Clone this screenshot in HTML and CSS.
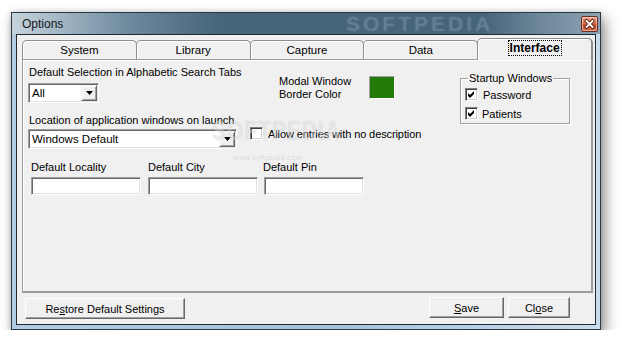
FILE: index.html
```html
<!DOCTYPE html>
<html>
<head>
  <title>Options</title>
  <meta name="viewport" content="width=device-width, initial-scale=1">
  <link rel="stylesheet" href="styles.css">
</head>
<body>
  <div class="window">
    <div class="titlebar">
      <span class="title">Options</span>
      <span class="wm-title">SOFTPEDIA</span>
      <span class="close-btn">
        <svg width="15" height="14" viewBox="0 0 15 14"><path d="M4.5 4L10.5 10M10.5 4L4.5 10" stroke="#5a1a0c" stroke-width="3.4" stroke-linecap="square"/><path d="M4.5 4L10.5 10M10.5 4L4.5 10" stroke="#fff" stroke-width="1.8" stroke-linecap="square"/></svg>
      </span>
    </div>
    <div class="client">
      <div class="tabs">
        <div class="tab">System</div>
        <div class="tab">Library</div>
        <div class="tab">Capture</div>
        <div class="tab">Data</div>
        <div class="tab active"><span class="focus">Interface</span></div>
      </div>
      <div class="panel">
        <div class="wm-body">SOFTPEDIA</div>
        <div class="wm-url">www.softpedia.com</div>
        <div class="top">
          <div class="left-col">
            <div class="lbl">Default Selection in Alphabetic Search Tabs</div>
            <div class="combo combo-all">
              <span class="combo-text">All</span>
              <span class="drop"><svg width="7" height="4" viewBox="0 0 7 4"><path d="M0 0H7L3.5 4Z" fill="#000"/></svg></span>
            </div>
            <div class="lbl lbl-loc">Location of application windows on launch</div>
            <div class="combo combo-loc">
              <span class="combo-text">Windows Default</span>
              <span class="drop"><svg width="7" height="4" viewBox="0 0 7 4"><path d="M0 0H7L3.5 4Z" fill="#000"/></svg></span>
            </div>
          </div>
          <div class="right-col">
            <div class="right-top">
              <div class="modal-lbl">Modal Window<br>Border Color</div>
              <div class="swatch"></div>
              <fieldset class="group">
                <legend>Startup Windows</legend>
                <label class="check"><span class="box"><svg width="7" height="7" viewBox="0 0 7 7"><path d="M0 2L2 4L6 0V3L2 7L0 5Z" fill="#000"/></svg></span>Password</label>
                <label class="check"><span class="box"><svg width="7" height="7" viewBox="0 0 7 7"><path d="M0 2L2 4L6 0V3L2 7L0 5Z" fill="#000"/></svg></span>Patients</label>
              </fieldset>
            </div>
            <label class="check allow"><span class="box"></span>Allow entries with no description</label>
          </div>
        </div>
        <div class="fields">
          <div class="field f-loc">
            <div class="lbl">Default Locality</div>
            <div class="edit"></div>
          </div>
          <div class="field f-city">
            <div class="lbl">Default City</div>
            <div class="edit"></div>
          </div>
          <div class="field f-pin">
            <div class="lbl pin-lbl">Default Pin</div>
            <div class="edit"></div>
          </div>
        </div>
      </div>
      <div class="actions">
        <button class="btn btn-restore">Re<u>s</u>tore Default Settings</button>
        <button class="btn btn-save"><u>S</u>ave</button>
        <button class="btn btn-close">Cl<u>o</u>se</button>
      </div>
    </div>
  </div>
</body>
</html>
```

FILE: styles.css
```css
body { margin:0; background:#fff; font-family:"Liberation Sans", Arial, sans-serif; font-size:11px; color:#000; }

.window { box-sizing:border-box; width:590px; height:318px; margin:12px 0 0 11px;
          border:1px solid #2b3944; padding:0 4px 4px;
          background:linear-gradient(to right, #b2cbe0, #a6c3dc 55%, #c9dcec);
          box-shadow:4px 6px 13px rgba(0,0,0,0.45), -1px 0 5px rgba(0,0,0,0.15);
          display:flex; flex-direction:column; }

.titlebar { height:21px; margin:0 -4px; padding:0 2px 0 10px; position:relative;
            display:flex; align-items:center; justify-content:space-between;
            background:linear-gradient(to right, #c6d3dc 0%, #a4b7c5 8%, #6c899d 20%, #47657b 35%, #46647a 80%, #6e889a 90%, #8ca2b2 100%); }
.title { font-size:12px; color:#101820; padding-top:1px; }
.wm-title { position:absolute; left:334px; top:0; font-size:21px; line-height:21px; font-weight:bold; letter-spacing:3px;
            color:rgba(200,218,230,0.1); text-shadow:0 0 2px rgba(200,218,230,0.18); }
.close-btn { width:17px; height:16px; box-sizing:border-box; margin-top:1px; border:1px solid #6e2a1a; border-radius:2px;
             background:linear-gradient(#eaa78f, #d46a49 45%, #c04a2a 55%, #cf6a48);
             box-shadow:inset 0 0 0 1px rgba(255,255,255,0.45);
             display:flex; align-items:center; justify-content:center; }

.client { flex:1; border:1px solid #1f2a32; background:#f0f0f0; padding:3px 2px 0 5px;
          display:flex; flex-direction:column; }

.tabs { display:flex; align-items:flex-end; height:21px; }
.tab { flex:1; height:19px; box-sizing:border-box; border:1px solid #8e8e8e; border-bottom:none;
       border-radius:5px 5px 0 0; box-shadow:inset 1px 1px 0 #fff; background:#f0f0f0;
       text-align:center; line-height:18px; font-size:11.5px; }
.tab + .tab { margin-left:-1px; }
.tab.active { height:22px; margin-bottom:-1px; position:relative; z-index:1; font-weight:bold; font-size:12px;
              border-right:2px solid #8e8e8e; line-height:19px; }
.focus { border:1px dotted #000; padding:0 1px; }

.panel { height:234px; box-sizing:border-box; position:relative; border:1px solid #9c9c9c;
         border-width:1px 2px 2px 1px; box-shadow:inset 1px 1px 0 #fff; padding:6px 0 0 6px; }

.wm-body { position:absolute; left:189px; top:59px; font-size:21px; font-weight:bold; letter-spacing:1px;
           transform:scaleY(1.35); color:rgba(255,255,255,0.4); text-shadow:0 0 1px rgba(0,0,0,0.12); }
.wm-url { position:absolute; left:210px; top:93px; font-size:8px; color:rgba(0,0,0,0.12); }

.lbl { line-height:13px; white-space:nowrap; }

.top { display:flex; }
.left-col { width:221px; }
.combo { box-sizing:border-box; height:20px; margin-left:-1px; background:#fff; display:flex; align-items:center;
         border:1px solid; border-color:#a0a0a0 #fff #fff #a0a0a0;
         box-shadow:inset 1px 1px 0 #696969, inset -1px -1px 0 #e3e3e3; padding:1px; }
.combo-all { width:71px; margin-top:4px; }
.combo-loc { width:209px; margin-top:2px; }
.combo-text { flex:1; padding-left:2px; font-size:11.5px; }
.drop { width:16px; height:16px; box-sizing:border-box; background:#f0f0f0; display:flex; align-items:center; justify-content:center;
        border:1px solid; border-color:#f0f0f0 #696969 #696969 #f0f0f0;
        box-shadow:inset 1px 1px 0 #fff, inset -1px -1px 0 #a0a0a0; }
.lbl-loc { margin-top:11px; }

.right-col { display:flex; flex-direction:column; }
.right-top { display:flex; align-items:flex-start; }
.modal-lbl { width:90px; margin:9px 0 0 29px; line-height:13px; }
.swatch { width:26px; height:23px; box-sizing:border-box; margin-top:10px; background:#257b0a;
          border:1px solid; border-color:#a0a0a0 #fff #fff #a0a0a0; }
.group { width:110px; box-sizing:border-box; margin:6px 0 0 65px; padding:0 0 0 4px;
         border:1px solid #a0a0a0; box-shadow:1px 1px 0 #fff, inset 1px 1px 0 #fff; }
.group legend { padding:0 1px; margin-left:3px; line-height:13px; }

.check { display:flex; align-items:center; height:19px; }
.box { width:13px; height:13px; box-sizing:border-box; margin-right:5px; background:#fff;
       border:1px solid; border-color:#808080 #fff #fff #808080;
       box-shadow:inset 1px 1px 0 #404040, inset -1px -1px 0 #d4d0c8;
       display:flex; align-items:center; justify-content:center; }
.group .check + .check .box { margin-right:4px; }
.allow { height:13px; margin-top:3px; letter-spacing:-0.1px; }

.fields { display:flex; margin-top:12px; padding-left:2px; }
.edit { height:18px; box-sizing:border-box; margin-top:3px; background:#fff;
        border:1px solid; border-color:#a0a0a0 #fff #fff #a0a0a0;
        box-shadow:inset 1px 1px 0 #696969, inset -1px -1px 0 #e3e3e3; }
.f-loc { width:110px; margin-right:7px; }
.f-city { width:110px; margin-right:6px; }
.f-pin { width:100px; }
.pin-lbl { margin-left:-1px; }

.actions { display:flex; margin-top:4px; padding-left:3px; }
.btn { box-sizing:border-box; height:21px; padding:0; background:#f0f0f0; color:#000;
       font-family:"Liberation Sans", Arial, sans-serif; font-size:11px;
       border:1px solid; border-color:#fff #696969 #696969 #fff; box-shadow:inset -1px -1px 0 #a0a0a0; }
.btn-restore { width:160px; margin-top:1px; }
.btn-save { width:75px; margin-left:auto; }
.btn-close { width:62px; margin-left:4px; margin-right:23px; }
```
